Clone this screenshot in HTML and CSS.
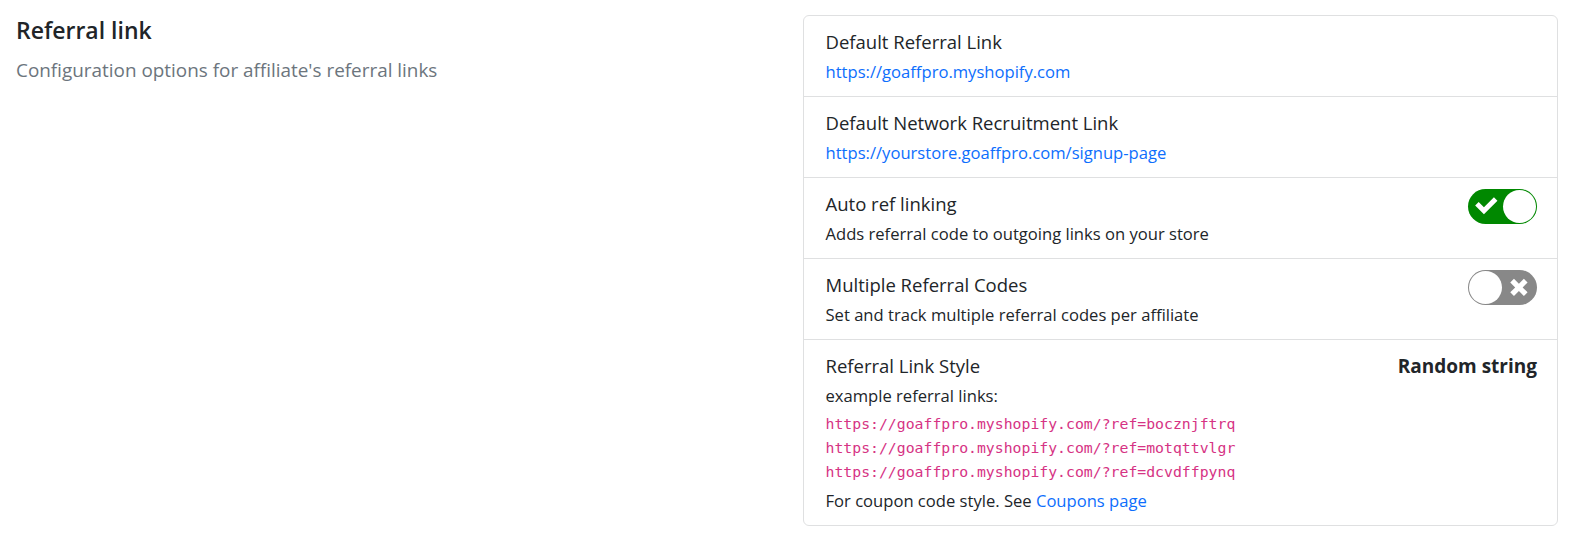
FILE: index.html
```html
<!DOCTYPE html>
<html lang="en">
<head>
<meta charset="utf-8">
<title>Referral link</title>
<link rel="stylesheet" href="styles.css">
</head>
<body>
<div class="page">
  <div class="col">
    <h2 class="section-title">Referral link</h2>
    <p class="section-sub">Configuration options for affiliate's referral links</p>
  </div>
  <div class="col">
    <div class="card">
      <div class="item">
        <div class="item-main">
          <div class="item-title">Default Referral Link</div>
          <a class="item-link" href="#">https://goaffpro.myshopify.com</a>
        </div>
      </div>
      <div class="item">
        <div class="item-main">
          <div class="item-title">Default Network Recruitment Link</div>
          <a class="item-link" href="#">https://yourstore.goaffpro.com/signup-page</a>
        </div>
      </div>
      <div class="item">
        <div class="item-main">
          <div class="item-title">Auto ref linking</div>
          <div class="item-desc">Adds referral code to outgoing links on your store</div>
        </div>
        <div class="switch on">
          <div class="switch-icon left">
            <svg viewBox="-2 -5 17 21" width="100%" height="100%"><path d="M11.264 0L5.26 6.004 2.103 2.847 0 4.95l5.26 5.26 8.108-8.107L11.264 0" fill="#fff" fill-rule="evenodd"/></svg>
          </div>
          <div class="switch-handle"></div>
        </div>
      </div>
      <div class="item">
        <div class="item-main">
          <div class="item-title">Multiple Referral Codes</div>
          <div class="item-desc">Set and track multiple referral codes per affiliate</div>
        </div>
        <div class="switch off">
          <div class="switch-icon right">
            <svg viewBox="-2 -5 14 20" width="100%" height="100%"><path d="M9.9 2.12L7.78 0 4.95 2.828 2.12 0 0 2.12l2.83 2.83L0 7.776 2.123 9.9 4.95 7.07 7.78 9.9 9.9 7.776 7.072 4.947z" fill="#fff" fill-rule="evenodd"/></svg>
          </div>
          <div class="switch-handle"></div>
        </div>
      </div>
      <div class="item">
        <div class="item-main">
          <div class="item-title">Referral Link Style</div>
          <div class="item-desc">example referral links:</div>
          <div class="codes">
            <code>https://goaffpro.myshopify.com/?ref=bocznjftrq</code>
            <code>https://goaffpro.myshopify.com/?ref=motqttvlgr</code>
            <code>https://goaffpro.myshopify.com/?ref=dcvdffpynq</code>
          </div>
          <div class="item-desc last">For coupon code style. See <a href="#">Coupons page</a></div>
        </div>
        <div class="item-value">Random string</div>
      </div>
    </div>
  </div>
</div>
</body>
</html>
```
FILE: styles.css
```css
* { box-sizing: border-box; }
body {
  margin: 0;
  font-family: "Open Sans", "Noto Sans", sans-serif;
  color: #212529;
  background: #fff;
}
a { color: #0d6efd; text-decoration: none; }
.page {
  display: grid;
  grid-template-columns: 1fr 1fr;
  padding-top: 15px;
}
.col { padding: 0 15px; min-width: 0; }
.section-title {
  margin: 0 0 0 1px;
  font-size: 23px;
  line-height: 31px;
  font-weight: 600;
}
.section-sub {
  margin: 10px 0 0 1px;
  font-size: 18.9px;
  line-height: 28px;
  color: #6c757d;
}
.card {
  margin-left: 1px;
  border: 1px solid #dfe0e1;
  border-radius: 6px;
}
.item {
  display: flex;
  align-items: flex-start;
  justify-content: space-between;
  padding: 12px 20px 11px 22px;
  border-bottom: 1px solid #dfe0e1;
}
.item:last-child { border-bottom: 0; padding-bottom: 11px; }
.item-title {
  font-size: 18.5px;
  line-height: 28px;
}
.item-link, .item-desc {
  display: block;
  margin-top: 3px;
  font-size: 16.6px;
  line-height: 26px;
}
.item-desc.last { margin-top: 4px; }
.codes {
  display: flex;
  flex-direction: column;
  margin-top: 3px;
}
code {
  font-family: "DejaVu Sans Mono", "Liberation Mono", monospace;
  font-size: 14.8px;
  line-height: 24px;
  color: #d63384;
}
.item-value {
  font-weight: 700;
  font-size: 19px;
  line-height: 28px;
}
.switch {
  position: relative;
  flex: none;
  width: 69px;
  height: 35px;
  border-radius: 17.5px;
  margin-top: -1px;
}
.switch.on { background: #008800; }
.switch.off { background: #888888; }
.switch-icon {
  position: absolute;
  top: 0;
  width: 36px;
  height: 35px;
}
.switch-icon.left { left: 0; }
.switch-icon.right { right: 0; }
.switch-icon svg { display: block; }
.switch-handle {
  position: absolute;
  top: 1px;
  width: 33px;
  height: 33px;
  border-radius: 50%;
  background: #fff;
}
.switch.on .switch-handle { left: 35px; }
.switch.off .switch-handle { left: 1px; }
```
